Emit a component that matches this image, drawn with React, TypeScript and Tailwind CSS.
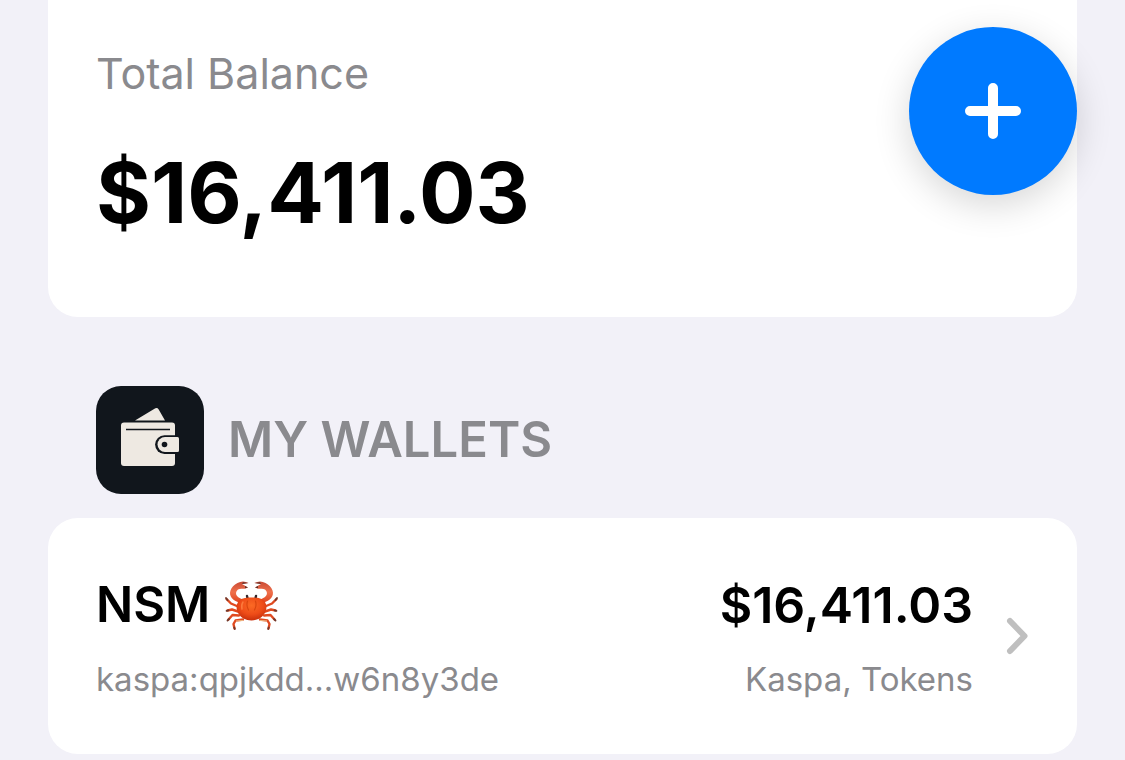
import React from "react";

const wallets = [
  {
    name: "NSM",
    address: "kaspa:qpjkdd...w6n8y3de",
    balance: "$16,411.03",
    assets: "Kaspa, Tokens",
  },
];

const WalletIcon = () => (
  <svg viewBox="0 0 108 108" className="size-27 shrink-0" aria-hidden="true">
    <rect width="108" height="108" rx="25" fill="#11161c" />
    <path
      d="M39 34.5 58.500 22.800Q61 21 62.700 23.500L69 34.500Z"
      fill="#eee9e2"
    />
    <rect x="25" y="36.500" width="54" height="43.500" rx="3" fill="#eee9e2" />
    <path d="M30 43.500H74" stroke="#11161c" strokeWidth="1.500" />
    <path d="M84 49.200H68.500a9.400 9.400 0 0 0 0 18.800H84Z" fill="#11161c" />
    <path
      d="M81.500 51H69a7.500 7.500 0 0 0 0 15H81.500Q83 66 83 64.500V52.500Q83 51 81.500 51Z"
      fill="#eee9e2"
    />
    <circle cx="68.500" cy="58.500" r="2.800" fill="#11161c" />
  </svg>
);

const CrabIcon = () => (
  <svg viewBox="10 10 55 50" className="h-[50px] w-[55px] shrink-0" role="img" aria-label="crab">
    <defs>
      <radialGradient id="shell" cx="50%" cy="35%" r="65%">
        <stop offset="0" stopColor="#fb6a24" />
        <stop offset="0.6" stopColor="#ee4c18" />
        <stop offset="1" stopColor="#c9300c" />
      </radialGradient>
      <linearGradient id="claw" x1="0" y1="0" x2="0" y2="1">
        <stop offset="0" stopColor="#c94a35" />
        <stop offset="0.5" stopColor="#f0714c" />
        <stop offset="1" stopColor="#de4420" />
      </linearGradient>
    </defs>
    {[false, true].map((flip) => (
      <g key={String(flip)} transform={flip ? "translate(75 0) scale(-1 1)" : undefined}>
        <g fill="none" stroke="#e04a20" strokeWidth="2.400" strokeLinecap="round" strokeLinejoin="round">
          <path d="M24 36.500 17 33.500 12.500 29" />
          <path d="M24 41.500 18 39.500 13.500 40.500" />
          <path d="M25 45.500 18.500 45 14.500 49.500" />
          <path d="M29 49.500 21.500 50.500 19.500 54 20.500 58.500" />
        </g>
        <path d="M29 50.500 22 51" stroke="#eebc86" strokeWidth="1.200" />
        <g fill="none" stroke="#70392c" strokeWidth="1.800" strokeLinecap="round">
          <path d="m13.500 30-1.500-2" />
          <path d="m14.500 40.300-2 .5" />
          <path d="m15 49-1.500 1.500" />
          <path d="m20.300 57.500.5 1.500" />
        </g>
        <path
          d="M25.500 32.500C19 31 14.500 26 16.500 20.500C17.500 17 20 15 23.500 13C27 11 31 11 34.500 13L28 14L34 17.500C30 20 27 17.500 24 19.500C20.500 23 21.500 26.500 28.500 29.500Z"
          fill="url(#claw)"
        />
        <path d="M29 12.300 34.500 13 28 14ZM31 16 34 17.500 31 18.300Z" fill="#5b302a" />
        <path d="M33.700 29 33 26" stroke="#33262a" strokeWidth="2.400" strokeLinecap="round" />
      </g>
    ))}
    <path
      d="M37.500 27.500C44 27.500 49 28.500 51 32C54.500 38 51 45 45.500 48.500C41 51 34 51 29.500 48.500C24 45 20.500 38 24 32C26 28.500 31 27.500 37.500 27.500Z"
      fill="url(#shell)"
    />
    <path
      d="M33.500 31Q32 36 34.500 40M41.500 31Q43 36 40.500 40"
      fill="none"
      stroke="#d9460f"
      strokeWidth="1.200"
      strokeLinecap="round"
    />
    <path d="M29 32Q27 35 28 39" fill="none" stroke="#fc7a3c" strokeWidth="1.500" strokeLinecap="round" />
  </svg>
);

const App = () => {
  return (
    <div className="min-h-screen bg-[#f2f1f8] px-12 pb-1.5 font-['Inter',sans-serif] text-black">
      {/* Add wallet */}
      <button
        type="button"
        aria-label="Add wallet"
        className="fixed top-[27px] right-12 z-10 flex size-42 items-center justify-center rounded-full bg-[#007aff] text-white shadow-[0_10px_36px_rgba(0,0,0,0.16)]"
      >
        <svg viewBox="0 0 56 56" className="size-14" aria-hidden="true">
          <path d="M28 5V51M5 28H51" stroke="currentColor" strokeWidth="10" strokeLinecap="round" />
        </svg>
      </button>

      {/* Total balance */}
      <section className="flex flex-col gap-11 rounded-b-[30px] bg-white px-12 pt-[45px] pb-19">
        <h2 className="text-[43px] leading-14 text-[#8a8a8e]">Total Balance</h2>
        <p className="text-[84px] leading-24 font-bold">$16,411.03</p>
      </section>

      {/* Wallet list */}
      <section>
        <div className="flex items-center gap-6 px-12 pt-[69px] pb-6">
          <WalletIcon />
          <h2 className="text-[49px] leading-16 font-semibold text-[#8a8a8e]">MY WALLETS</h2>
        </div>
        <ul>
          {wallets.map((wallet) => (
            <li key={wallet.address}>
              <button
                type="button"
                className="flex w-full items-center gap-8 rounded-[30px] bg-white px-12 py-[55px] text-left"
              >
                <span className="flex flex-1 flex-col gap-[22px]">
                  <span className="flex items-center gap-3.5 text-[49px] leading-16 font-semibold">
                    {wallet.name}
                    <CrabIcon />
                  </span>
                  <span className="text-[33px] leading-10 text-[#8a8a8e]">{wallet.address}</span>
                </span>
                <span className="flex flex-col gap-[22px] text-right">
                  <span className="text-[50px] leading-16 font-semibold">{wallet.balance}</span>
                  <span className="text-[33px] leading-10 text-[#8a8a8e]">{wallet.assets}</span>
                </span>
                <svg viewBox="0 0 24 40" className="h-10 w-6 shrink-0" aria-hidden="true">
                  <path
                    d="M5 5 19.500 20 5 35"
                    fill="none"
                    stroke="#bfbfbf"
                    strokeWidth="6"
                    strokeLinecap="round"
                    strokeLinejoin="round"
                  />
                </svg>
              </button>
            </li>
          ))}
        </ul>
      </section>
    </div>
  );
};

export default App;
